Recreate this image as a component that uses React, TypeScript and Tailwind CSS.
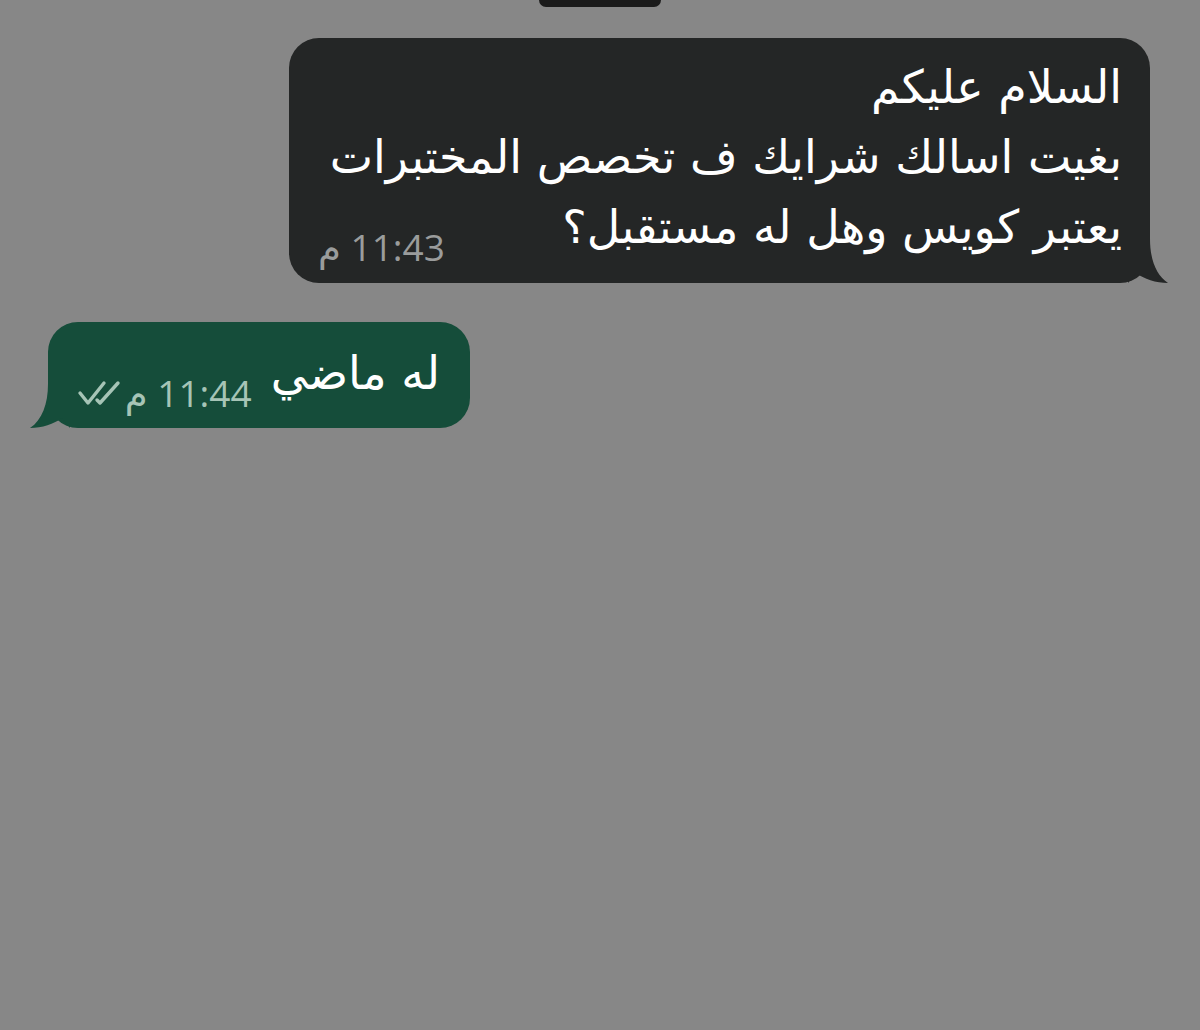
import React from "react";

const arabic = { fontFamily: '"DejaVu Sans", sans-serif' };
const meta = { fontFamily: '"Open Sans", "DejaVu Sans", sans-serif' };

function DoubleCheck() {
  return (
    <svg width="44" height="26" viewBox="0 0 44 26" fill="none" stroke="currentColor" strokeWidth="3.4" strokeLinecap="round" strokeLinejoin="round">
      <path d="M3 13l8 10L27 3" />
      <path d="M20 20l3 3L41 3" />
    </svg>
  );
}

export default function App() {
  return (
    <div className="w-[1200px] h-[1030px] bg-[#878787] flex flex-col overflow-hidden">
      <div className="self-center w-[122px] h-[7px] rounded-b-full bg-[#1b1b1b]" />

      {/* incoming message */}
      <div className="self-end mr-[50px] mt-[31px] relative">
        <div className="w-[861px] h-[245px] rounded-[30px] bg-[#242626] pt-[14px] pr-[28px] pl-[29px] text-white" dir="rtl" style={arabic}>
          <div className="text-[46px] leading-[70px] whitespace-nowrap">السلام عليكم</div>
          <div className="text-[46px] leading-[70px] whitespace-nowrap">بغيت اسالك شرايك ف تخصص المختبرات</div>
          <div className="flex items-end justify-between">
            <div className="text-[46px] leading-[70px] whitespace-nowrap">يعتبر كويس وهل له مستقبل؟</div>
            <div className="text-[37px] leading-none text-[#9a9c9c] mb-[-3px] whitespace-nowrap" style={meta}>
              11:43 م
            </div>
          </div>
        </div>
        <svg className="absolute right-[-18px] bottom-0" width="40" height="44" viewBox="0 0 40 44">
          <path d="M0 0 H22 C22 20 28 36 40 44 C28 44 16 40 8 34 L0 44 Z" fill="#242626" />
        </svg>
      </div>

      {/* outgoing message */}
      <div className="self-start ml-[48px] mt-[39px] relative">
        <div className="w-[422px] h-[106px] rounded-[30px] bg-[#154d3a] pr-[30px] pl-[32px] flex items-start gap-[19px]" dir="rtl">
          <div className="text-[46px] leading-[70px] mt-[16px] text-white whitespace-nowrap" style={arabic}>
            له ماضي
          </div>
          <div className="flex items-center gap-[4px] mt-[52px] text-[#a6c4b6]" style={meta}>
            <span className="text-[37px] leading-none whitespace-nowrap">11:44 م</span>
            <DoubleCheck />
          </div>
        </div>
        <svg className="absolute left-[-18px] bottom-0" width="40" height="44" viewBox="0 0 40 44">
          <path d="M40 0 H18 C18 20 12 36 0 44 C12 44 24 40 32 34 L40 44 Z" fill="#154d3a" />
        </svg>
      </div>
    </div>
  );
}
